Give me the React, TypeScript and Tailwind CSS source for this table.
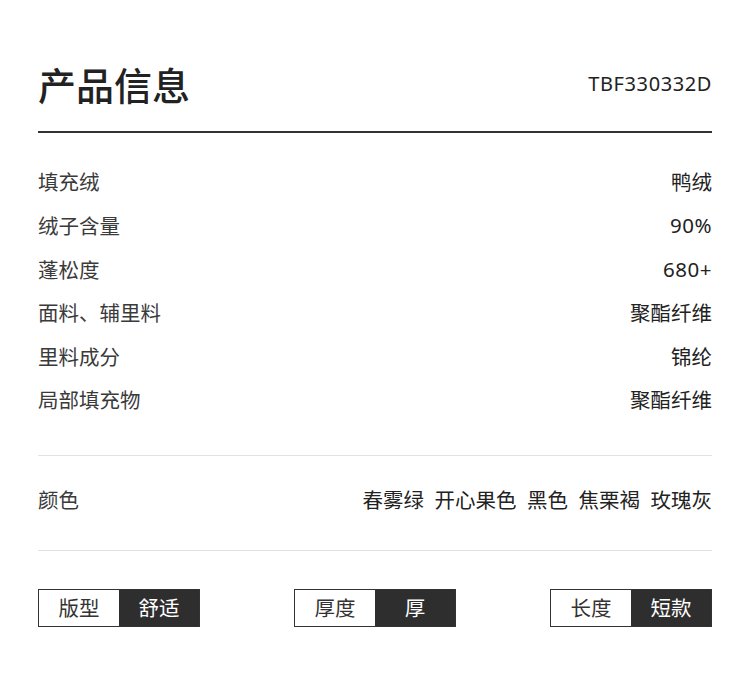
import React from 'react';

const specs = [
  { label: '填充绒', value: '鸭绒' },
  { label: '绒子含量', value: '90%' },
  { label: '蓬松度', value: '680+' },
  { label: '面料、辅里料', value: '聚酯纤维' },
  { label: '里料成分', value: '锦纶' },
  { label: '局部填充物', value: '聚酯纤维' },
];

const colors = ['春雾绿', '开心果色', '黑色', '焦栗褐', '玫瑰灰'];

const tags = [
  { name: '版型', value: '舒适' },
  { name: '厚度', value: '厚' },
  { name: '长度', value: '短款' },
];

const cjk = "font-['Noto_Sans_CJK_SC',sans-serif]";
const latin = "font-['Noto_Sans','Noto_Sans_CJK_SC',sans-serif]";

export default function App() {
  return (
    <div className={`w-[750px] h-[683px] bg-white px-[38px] pt-[51px] ${cjk}`}>
      <div className="flex items-center justify-between h-[66px] mb-[14px]">
        <h1 className="text-[38px] leading-none text-[#222] font-medium">产品信息</h1>
        <span className={`${latin} text-[20px] text-[#222] tracking-[0.6px]`}>TBF330332D</span>
      </div>
      <div className="h-[2px] bg-[#333]" />

      <div className="mt-[27px]">
        {specs.map((s) => (
          <div key={s.label} className="flex items-center justify-between h-[43.6px] text-[20.5px]">
            <span className="text-[#3a3a3a]">{s.label}</span>
            {/^[\x00-\x7f]+$/.test(s.value) ? (
              <span className={`${latin} text-[#222] tracking-[0.5px]`}>{s.value}</span>
            ) : (
              <span className="text-[#222]">{s.value}</span>
            )}
          </div>
        ))}
      </div>

      <div className="mt-[33px] h-px bg-[#e2e2e2]" />
      <div className="flex items-center justify-between h-[94px] pb-[6px] text-[20.5px]">
        <span className="text-[#3a3a3a]">颜色</span>
        <div className="flex gap-[10.5px] text-[#222]">
          {colors.map((c) => (
            <span key={c}>{c}</span>
          ))}
        </div>
      </div>
      <div className="h-px bg-[#e2e2e2]" />

      <div className="mt-[38px] flex justify-between">
        {tags.map((t) => (
          <div key={t.name} className="flex w-[162px] h-[38px] border border-[#333] text-[20.5px]">
            <div className="w-[80px] flex items-center justify-center text-[#333]">{t.name}</div>
            <div className="flex-1 flex items-center justify-center bg-[#2e2e2e] text-white">{t.value}</div>
          </div>
        ))}
      </div>
    </div>
  );
}
